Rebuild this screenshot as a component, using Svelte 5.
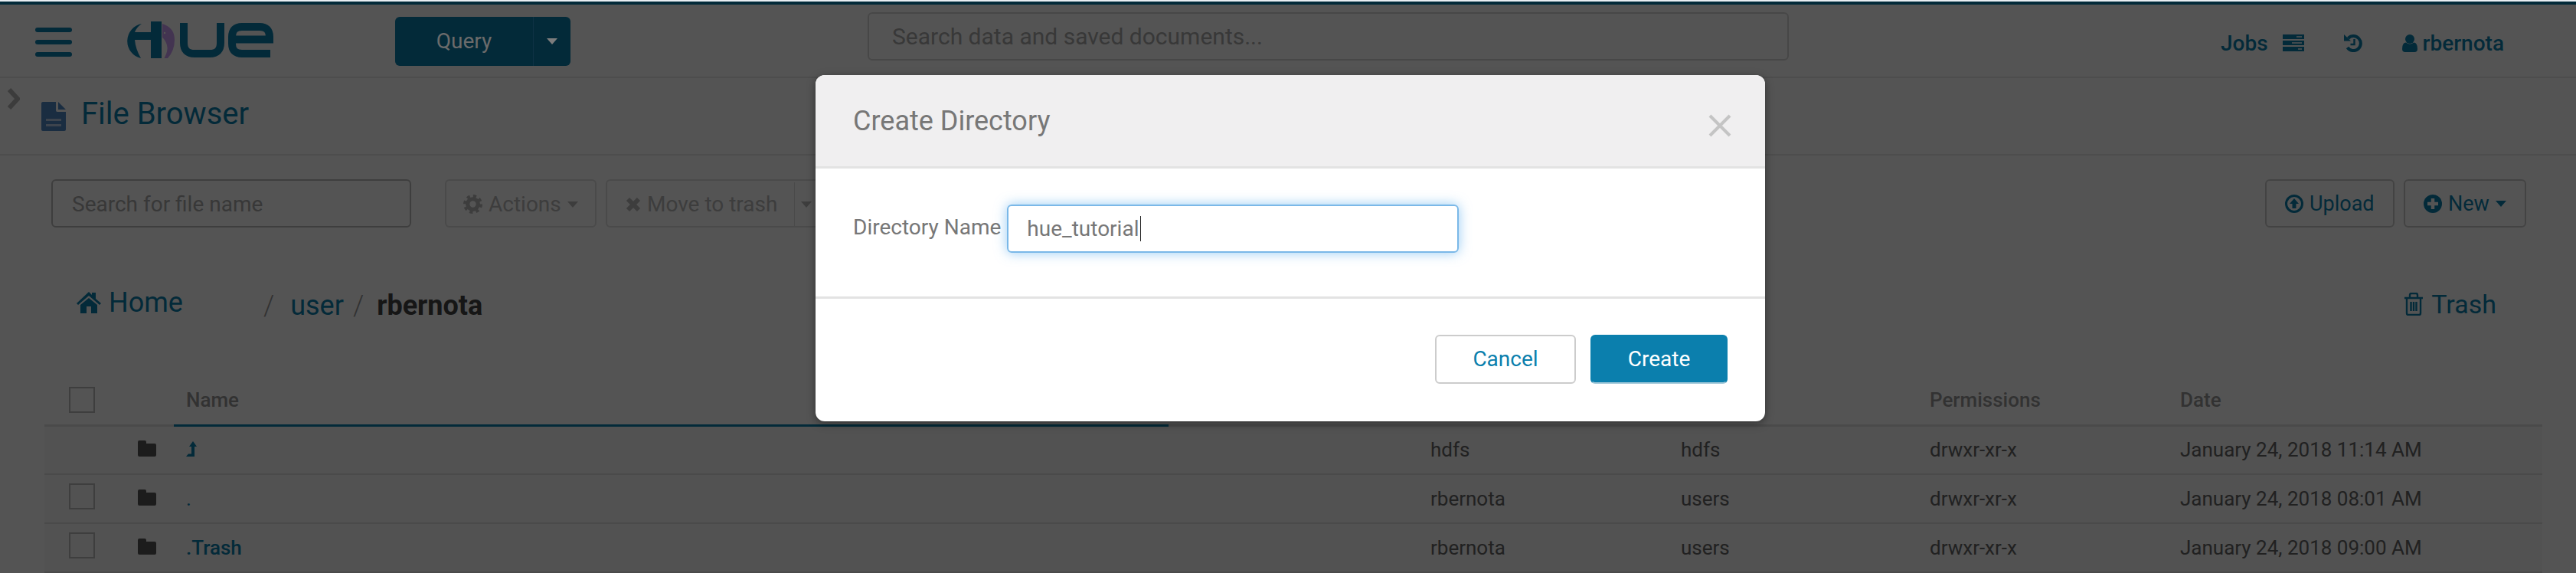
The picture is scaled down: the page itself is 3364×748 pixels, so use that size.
<script>
	const rows = [
		{ id: 'up', name: '', up: true, user: 'hdfs', group: 'hdfs', perms: 'drwxr-xr-x', date: 'January 24, 2018 11:14 AM' },
		{ id: 'cur', name: '.', user: 'rbernota', group: 'users', perms: 'drwxr-xr-x', date: 'January 24, 2018 08:01 AM' },
		{ id: 'trash', name: '.Trash', bold: true, user: 'rbernota', group: 'users', perms: 'drwxr-xr-x', date: 'January 24, 2018 09:00 AM' }
	];
</script>

<div class="page">
	<header class="navbar">
		<div class="hamburger"><span></span><span></span><span></span></div>
		<svg class="logo" viewBox="166 28 192 48" width="192" height="48" aria-label="Hue">
			<!-- crescent, crossbar and stem of the H -->
			<path d="M185 31 A 23 23 0 0 0 184 76 Q177 64 176 52 H197 V76 H211 V28 H197 V42 H176 Q178 36 185 31 Z" fill="#0b7fad" />
			<path d="M212 31 Q228 36 228 52 Q228 66 219 76 H214.500 Q220 66 218 59 Q216 52 212 49 Z" fill="#cb9ef5" />
			<circle cx="215" cy="43" r="1.200" fill="#fff" />
			<path d="M240 30 V56 Q240 70 254 70 H274 Q288 70 288 56 V30" fill="none" stroke="#0b7fad" stroke-width="10" />
			<path d="M303 51.500 H352 V48 Q352 35 339 35 H316 Q303 35 303 48 V57 Q303 70 316 70 H353" fill="none" stroke="#0b7fad" stroke-width="10" />
		</svg>
		<div class="query-btn">
			<span class="query-label">Query</span>
			<span class="query-caret"><i class="caret white"></i></span>
		</div>
		<div class="global-search">Search data and saved documents...</div>
		<nav class="nav-right">
			<span class="jobs">Jobs</span>
			<svg class="jobs-icon" viewBox="0 0 28 22" width="28" height="22">
				<path d="M0 0h28v6H0z M0 8h28v6H0z M0 16h28v6H0z" fill="#0b7fad" />
				<path d="M18 2.200h7v1.600h-7z M12 10.200h13v1.600H12z M20 18.200h5v1.600h-5z" fill="#fff" />
			</svg>
			<svg class="history-icon" viewBox="0 0 24 24" width="24" height="24">
				<path d="M5.500 6 A 9.500 9.500 0 1 1 4.500 18" fill="none" stroke="#0b7fad" stroke-width="4" />
				<path d="M0 1 L9 9.500 H0 Z" fill="#0b7fad" />
				<path d="M13.500 7 V14 H8.500" fill="none" stroke="#0b7fad" stroke-width="2.400" />
			</svg>
			<svg class="user-icon" viewBox="0 0 20 23" width="20" height="23">
				<circle cx="10" cy="6" r="6" fill="#0b7fad" />
				<path d="M0 19 Q0 10.500 5 10.500 Q10 14.500 15 10.500 Q20 10.500 20 19 Q20 23 16 23 H4 Q0 23 0 19 Z" fill="#0b7fad" />
			</svg>
			<span class="username">rbernota</span>
		</nav>
	</header>

	<div class="page-title">
		<svg class="chevron" viewBox="0 0 18 28" width="18" height="28">
			<path d="M4 2 L15 14 L4 26" fill="none" stroke="#b5b5b5" stroke-width="6" />
		</svg>
		<svg class="file-icon" viewBox="0 0 32 38" width="32" height="38">
			<path d="M2 0H19V11Q19 13 21 13H32V36Q32 38 30 38H2Q0 38 0 36V2Q0 0 2 0Z M22 0L32 10H22Z" fill="#4f88c6" />
			<path d="M6 22H26V25H6Z M6 29H26V32H6Z" fill="#fff" opacity="0.6" />
		</svg>
		<h1>File Browser</h1>
	</div>

	<div class="toolbar">
		<div class="file-search">Search for file name</div>
		<div class="btn disabled actions">
			<svg viewBox="0 0 24 24" width="25" height="25">
				<circle cx="12" cy="12" r="6.500" fill="none" stroke="#b8b8b8" stroke-width="5" />
				<circle cx="12" cy="12" r="10" fill="none" stroke="#b8b8b8" stroke-width="4" stroke-dasharray="4 3.850" />
			</svg>
			Actions <i class="caret gray"></i>
		</div>
		<div class="btn disabled trash-btn">
			<svg viewBox="0 0 20 24" width="20" height="24">
				<path d="M3 5 L17 19 M17 5 L3 19" fill="none" stroke="#b8b8b8" stroke-width="6" />
			</svg>
			Move to trash
			<span class="split"></span>
			<i class="caret gray"></i>
		</div>
		<div class="toolbar-right">
			<div class="btn primary upload">
				<svg viewBox="0 0 24 26" width="24" height="26">
					<circle cx="12" cy="13" r="10.500" fill="none" stroke="#0b7fad" stroke-width="3" />
					<path d="M12 6 L18 13 H14.500 V19 H9.500 V13 H6 Z" fill="#0b7fad" />
				</svg>
				Upload
			</div>
			<div class="btn primary new">
				<svg viewBox="0 0 24 26" width="24" height="26">
					<circle cx="12" cy="13" r="12" fill="#0b7fad" />
					<path d="M5 13H19M12 6V20" stroke="#fff" stroke-width="4.500" />
				</svg>
				New <i class="caret blue"></i>
			</div>
		</div>
	</div>

	<div class="crumbs">
		<span class="home">
			<svg viewBox="0 0 32 28" width="32" height="28">
				<path d="M16 0 L20 4 V1 H25 V9 L32 15 L30 17 L16 5 L2 17 L0 15 Z M5 17 L16 8 L27 17 V28 H19 V19 H13 V28 H5 Z" fill="#0b7fad" />
			</svg>
			Home
		</span>
		<span class="slash first">/</span>
		<span class="crumb-link">user</span>
		<span class="slash">/</span>
		<strong>rbernota</strong>
		<span class="crumb-trash">
			<svg viewBox="0 0 26 30" width="26" height="30">
				<path d="M1 7H25 M8 7V3Q8 1 10 1H16Q18 1 18 3V7 M4 7V27Q4 29 6 29H20Q22 29 22 27V7 M9.500 12V24 M13 12V24 M16.500 12V24" fill="none" stroke="#0b7fad" stroke-width="2.400" />
			</svg>
			Trash
		</span>
	</div>

	<table>
		<colgroup>
			<col style="width:106px" /><col style="width:63px" /><col style="width:1299px" /><col style="width:324px" />
			<col style="width:327px" /><col style="width:325px" /><col style="width:327px" /><col />
		</colgroup>
		<thead>
			<tr>
				<th class="check"><span class="box"></span></th>
				<th></th>
				<th class="sorted">Name</th>
				<th></th>
				<th>User</th>
				<th>Group</th>
				<th>Permissions</th>
				<th>Date</th>
			</tr>
		</thead>
		<tbody>
			{#each rows as row (row.id)}
				<tr>
					<td class="check">
						{#if !row.up}<span class="box"></span>{/if}
					</td>
					<td class="folder">
						<svg viewBox="0 0 24 21" width="24" height="21">
							<path d="M2 0H9Q11 0 11 2V4H22Q24 4 24 6V19Q24 21 22 21H2Q0 21 0 19V2Q0 0 2 0Z" fill="#555" />
						</svg>
					</td>
					<td class="name" class:bold={row.bold}>
						{#if row.up}
							<svg viewBox="0 0 14 20" width="14" height="20">
								<path d="M9 0 L14 7 H11 V20 H0 L3 16.500 H7 V7 H4 Z" fill="#0b7fad" />
							</svg>
						{:else}
							{row.name}
						{/if}
					</td>
					<td></td>
					<td>{row.user}</td>
					<td>{row.group}</td>
					<td>{row.perms}</td>
					<td>{row.date}</td>
				</tr>
			{/each}
		</tbody>
	</table>

	<div class="backdrop">
		<div class="modal">
			<div class="modal-header">
				<h3>Create Directory</h3>
				<span class="close">
					<svg viewBox="0 0 30 30" width="30" height="30">
						<path d="M2 2 L28 28 M28 2 L2 28" fill="none" stroke="#c4c4c4" stroke-width="4" />
					</svg>
				</span>
			</div>
			<div class="modal-body">
				<span class="field-label">Directory Name</span>
				<div class="field">hue_tutorial<span class="text-caret"></span></div>
			</div>
			<div class="modal-footer">
				<div class="modal-btn cancel">Cancel</div>
				<div class="modal-btn create">Create</div>
			</div>
		</div>
	</div>
</div>

<style>
	:global(body) {
		margin: 0;
		background: #fff;
	}

	.page {
		position: relative;
		height: 748px;
		overflow: hidden;
		background: #fff;
		font-family: Roboto, 'Liberation Sans', sans-serif;
		font-size: 26px;
		color: #666;
		border-top: 2px solid #e8eef2;
		box-sizing: border-box;
	}

	.navbar {
		display: flex;
		align-items: center;
		box-sizing: border-box;
		height: 100px;
		border-top: 4px solid #0b7fad;
		border-bottom: 2px solid #e8e8e8;
	}

	.hamburger {
		display: flex;
		flex-direction: column;
		gap: 10px;
		width: 48px;
		margin-left: 46px;
		margin-top: 4px;
	}

	.hamburger span {
		height: 6px;
		border-radius: 3px;
		background: #0b7fad;
	}

	.logo {
		margin-left: 72px;
		margin-bottom: 2px;
	}

	.query-btn {
		display: flex;
		width: 229px;
		height: 64px;
		margin-left: 158px;
		margin-top: 2px;
		border-radius: 6px;
		background: #0b7fad;
		font-size: 28px;
	}

	/* the label shows lighter than a dimmed white, so it sits above the backdrop */
	.query-label {
		position: relative;
		z-index: 2;
		flex: 1;
		line-height: 64px;
		text-align: center;
		color: #6b6b6b;
		border-right: 1px solid #0e3244;
	}

	.query-caret {
		position: relative;
		z-index: 2;
		display: flex;
		align-items: center;
		justify-content: center;
		width: 48px;
	}

	.caret {
		display: inline-block;
		flex: none;
		width: 0;
		height: 0;
		border-left: 7px solid transparent;
		border-right: 7px solid transparent;
		border-top: 8px solid currentColor;
	}

	.caret.white {
		color: #7d7d7d;
	}

	.caret.gray {
		color: #b8b8b8;
	}

	.caret.blue {
		color: #0b7fad;
	}

	.global-search {
		box-sizing: border-box;
		width: 1203px;
		height: 63px;
		margin-left: 388px;
		margin-bottom: 11px;
		padding-left: 30px;
		border: 2px solid #d8d8d8;
		border-radius: 6px;
		line-height: 59px;
		font-size: 30px;
		color: #aaa;
	}

	.nav-right {
		display: flex;
		align-items: center;
		margin-left: auto;
		padding-right: 94px;
		margin-top: 6px;
		font-size: 28px;
		font-weight: 500;
		color: #0b7fad;
	}

	.jobs-icon {
		margin-left: 19px;
	}

	.history-icon {
		margin-left: 52px;
	}

	.user-icon {
		margin-left: 52px;
	}

	.username {
		margin-left: 7px;
	}

	.page-title {
		position: relative;
		display: flex;
		align-items: center;
		height: 101px;
		box-sizing: border-box;
		padding-left: 54px;
		border-bottom: 2px solid #e8e8e8;
	}

	.chevron {
		position: absolute;
		left: 8px;
		top: 13px;
	}

	.page-title h1 {
		margin: 0 0 6px 20px;
		font-size: 40px;
		font-weight: 400;
		color: #0b7fad;
	}

	.toolbar {
		display: flex;
		padding: 31px 65px 0 67px;
	}

	.file-search {
		box-sizing: border-box;
		width: 470px;
		height: 63px;
		padding-left: 25px;
		border: 2px solid #bbb;
		border-radius: 6px;
		line-height: 61px;
		font-size: 28px;
		color: #aaa;
	}

	.btn {
		display: flex;
		align-items: center;
		gap: 8px;
		box-sizing: border-box;
		height: 63px;
		border: 2px solid #dfdfdf;
		border-radius: 6px;
		white-space: nowrap;
	}

	.btn.disabled {
		color: #b8b8b8;
		font-size: 28px;
		padding-top: 2px;
	}

	.btn.primary {
		color: #0b7fad;
		border-color: #ccc;
		padding: 0 24px;
		font-size: 27px;
	}

	.actions {
		width: 198px;
		margin-left: 44px;
		padding-left: 22px;
	}

	.trash-btn {
		width: 300px;
		margin-left: 12px;
		padding-left: 24px;
	}

	.split {
		width: 1px;
		height: 100%;
		margin-left: 14px;
		background: #dfdfdf;
	}

	.toolbar-right {
		display: flex;
		gap: 12px;
		margin-left: auto;
	}

	.upload {
		width: 169px;
	}

	.new {
		width: 160px;
	}

	.crumbs {
		display: flex;
		align-items: center;
		height: 60px;
		margin-top: 72px;
		padding: 0 104px 0 100px;
		font-size: 36px;
		color: #0b7fad;
	}

	.home {
		display: flex;
		align-items: center;
		gap: 10px;
		margin-top: -9px;
	}

	.slash {
		color: #999;
		font-weight: 300;
		margin: 0 12px;
	}

	.slash.first {
		margin-left: 105px;
		margin-right: 21px;
	}

	.crumbs strong {
		margin-left: 5px;
		font-weight: 700;
		color: #444;
	}

	.crumb-trash {
		display: flex;
		align-items: center;
		gap: 10px;
		margin-left: auto;
		margin-top: -4px;
		font-size: 34px;
	}

	table {
		table-layout: fixed;
		width: 3262px;
		margin: 64px 0 0 58px;
		border-collapse: collapse;
	}

	th {
		height: 62px;
		padding: 0 0 2px 18px;
		box-sizing: border-box;
		text-align: left;
		font-weight: 500;
		color: #999;
		border-bottom: 3px solid #e1e1e1;
	}

	th.sorted {
		padding-left: 16px;
		border-bottom-color: #0b7fad;
	}

	td {
		height: 64px;
		box-sizing: border-box;
		padding: 0 0 0 18px;
		border-bottom: 2px solid #e1e1e1;
		white-space: nowrap;
		background: #f7f7f7;
	}

	th.check,
	td.check {
		padding-left: 32px;
	}

	.box {
		display: block;
		box-sizing: border-box;
		width: 34px;
		height: 34px;
		border: 2px solid #bbb;
	}

	td .box {
		margin-top: -6px;
	}

	td.folder {
		padding-left: 16px;
	}

	.folder svg {
		display: block;
		margin-top: -3px;
	}

	td.name {
		padding-left: 16px;
		color: #0b7fad;
	}

	.name svg {
		display: block;
		margin-top: -3px;
	}

	.bold {
		font-weight: 500;
	}

	.backdrop {
		position: absolute;
		inset: 0;
		z-index: 1;
		display: flex;
		justify-content: center;
		align-items: flex-start;
		padding: 96px 0 0 6px;
		background: rgba(0, 0, 0, 0.67);
	}

	.modal {
		width: 1240px;
		height: 452px;
		border-radius: 12px;
		overflow: hidden;
		background: #fff;
		color: #777;
		box-shadow: 0 3px 12px rgba(0, 0, 0, 0.4);
	}

	.modal-header {
		display: flex;
		align-items: flex-start;
		justify-content: space-between;
		box-sizing: border-box;
		height: 122px;
		padding: 40px 44px 0 49px;
		background: #f0eff0;
		border-bottom: 3px solid #e3e3e3;
	}

	.modal-header h3 {
		margin: 0;
		font-size: 36px;
		font-weight: 400;
		line-height: 40px;
	}

	.close {
		display: block;
		margin-top: 11px;
	}

	.modal-body {
		display: flex;
		align-items: center;
		gap: 8px;
		box-sizing: border-box;
		height: 170px;
		padding: 0 0 10px 49px;
		border-bottom: 3px solid #e3e3e3;
		font-size: 28px;
	}

	.field-label {
		margin-top: -4px;
	}

	.field {
		display: flex;
		align-items: center;
		box-sizing: border-box;
		width: 590px;
		height: 63px;
		padding-left: 24px;
		border: 2px solid #7ab8e8;
		border-radius: 6px;
		box-shadow: 0 0 16px rgba(82, 168, 236, 0.6);
		color: #777;
	}

	.text-caret {
		width: 1px;
		height: 33px;
		margin-left: 2px;
		background: #222;
	}

	.modal-footer {
		display: flex;
		justify-content: flex-end;
		gap: 19px;
		padding: 47px 49px 0 0;
		font-size: 28px;
	}

	.modal-btn {
		box-sizing: border-box;
		height: 64px;
		border-radius: 6px;
		line-height: 60px;
		text-align: center;
	}

	.cancel {
		width: 184px;
		border: 2px solid #ccc;
		color: #0b7fad;
	}

	.create {
		width: 179px;
		border: 2px solid #0b7fad;
		border-bottom-color: #9fc7d8;
		background: #0b7fad;
		color: #fff;
	}
</style>
